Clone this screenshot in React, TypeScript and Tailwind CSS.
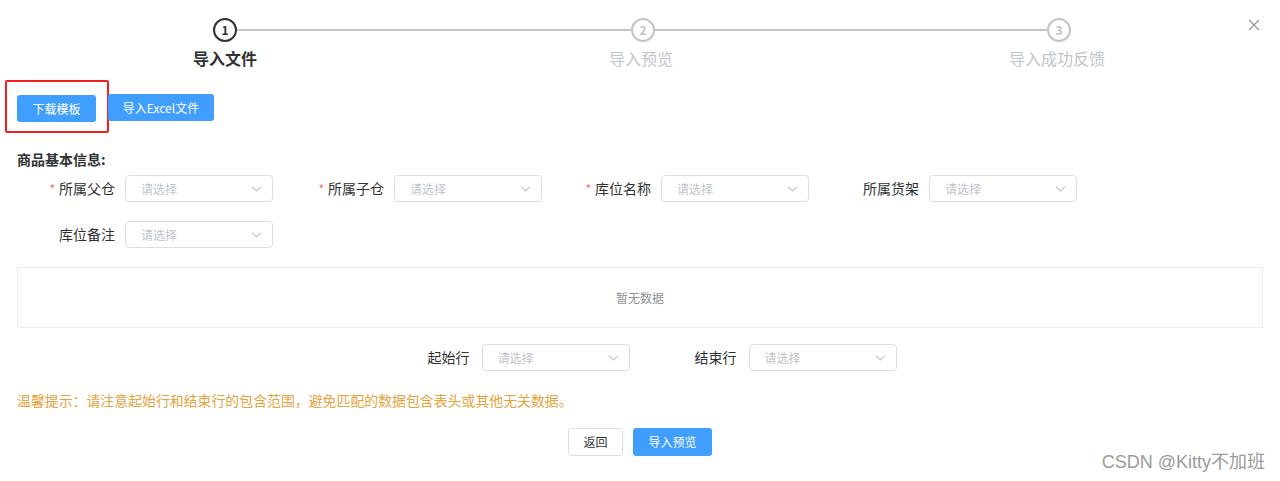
import React from "react";

const font = { fontFamily: '"Noto Sans CJK SC", "Noto Sans", "Liberation Sans", sans-serif' };

function Chevron() {
  return (
    <svg width="13" height="13" viewBox="0 0 12 12" fill="none" className="text-[#c0c4cc]">
      <path d="M1.8 4.2 L6 8.2 L10.2 4.2" stroke="currentColor" strokeWidth="1" />
    </svg>
  );
}

function Select() {
  return (
    <div className="w-[148px] h-[27px] border border-[#dcdfe6] rounded-[4px] bg-white flex items-center justify-between pl-[15px] pr-[9px] shrink-0">
      <span className="text-[12px] text-[#c0c4cc]">请选择</span>
      <Chevron />
    </div>
  );
}

function Field({ label, required, labelW = "w-[110px]" }: { label: string; required?: boolean; labelW?: string }) {
  return (
    <div className="flex items-center">
      <div className={`${labelW} pr-[10px] text-right text-[14px] text-[#303133] shrink-0`}>
        {required && <span className="text-[#f56c6c] mr-[4px] text-[12px]">*</span>}
        {label}
      </div>
      <Select />
    </div>
  );
}

function Circle({ n, active }: { n: number; active?: boolean }) {
  return (
    <div
      className={`w-[24px] h-[24px] rounded-full border-2 flex items-center justify-center text-[12px] font-bold shrink-0 ${
        active ? "border-[#303133] text-[#303133]" : "border-[#c0c4cc] text-[#c0c4cc]"
      }`}
    >
      {n}
    </div>
  );
}

export default function App() {
  return (
    <div className="w-[1280px] h-[481px] bg-white relative overflow-hidden" style={font}>
      {/* close */}
      <div className="absolute right-[20px] top-[19px]">
        <svg width="12" height="12" viewBox="0 0 12 12">
          <path d="M1 1 L11 11 M11 1 L1 11" stroke="#909399" strokeWidth="1.1" />
        </svg>
      </div>

      {/* steps */}
      <div className="pt-[18px] pl-[17px]">
        <div className="flex items-center">
          <div className="w-[196px]" />
          <Circle n={1} active />
          <div className="w-[394px] h-[2px] bg-[#c0c4cc]" />
          <Circle n={2} />
          <div className="w-[392px] h-[2px] bg-[#c0c4cc]" />
          <Circle n={3} />
        </div>
        <div className="flex mt-[5px]">
          <div className="w-[416px] text-center text-[16px] font-bold text-[#303133] leading-[22px]">导入文件</div>
          <div className="w-[416px] text-center text-[16px] text-[#c0c4cc] leading-[22px]">导入预览</div>
          <div className="w-[416px] text-center text-[16px] text-[#c0c4cc] leading-[22px]">导入成功反馈</div>
        </div>
      </div>

      {/* buttons */}
      <div className="flex items-start mt-[11px] pl-[5px]">
        <div className="border-2 border-[#f0201c] rounded-[2px] w-[104px] h-[53px] pl-[10px] pt-[13px] shrink-0">
          <div className="w-[79px] h-[27px] bg-[#409eff] rounded-[3px] text-white text-[12px] flex items-center justify-center">下载模板</div>
        </div>
        <div className="-ml-[1px] mt-[14px] w-[106px] h-[27px] bg-[#409eff] rounded-[3px] text-white text-[12px] flex items-center justify-center">导入Excel文件</div>
      </div>

      {/* basic info */}
      <div className="pl-[17px] mt-[16px] text-[14px] font-bold text-[#303133] leading-[20px]">商品基本信息:</div>
      <div className="pl-[15px] mt-[6px] flex flex-wrap gap-y-[19px] w-[1200px]">
        <div className="w-[268px]"><Field label="所属父仓" required /></div>
        <div className="w-[267px]"><Field label="所属子仓" required labelW="w-[111px]" /></div>
        <div className="w-[267px]"><Field label="库位名称" required labelW="w-[111px]" /></div>
        <div className="w-[267px]"><Field label="所属货架" labelW="w-[112px]" /></div>
        <div className="w-[268px]"><Field label="库位备注" /></div>
      </div>

      {/* table */}
      <div className="mx-[17px] mt-[19px] w-[1246px] h-[61px] border border-[#ebeef5] flex items-center justify-center">
        <span className="text-[12px] text-[#909399]">暂无数据</span>
      </div>

      {/* row range */}
      <div className="flex justify-center mt-[16px] pr-[14px]">
        <div className="flex items-center">
          <div className="w-[112px] pr-[12px] text-right text-[14px] text-[#303133]">起始行</div>
          <Select />
        </div>
        <div className="flex items-center ml-[7px]">
          <div className="w-[112px] pr-[12px] text-right text-[14px] text-[#303133]">结束行</div>
          <Select />
        </div>
      </div>

      {/* tip */}
      <div className="pl-[17px] mt-[19px] text-[13.9px] text-[#e6a23c] leading-[20px]">
        温馨提示：请注意起始行和结束行的包含范围，避免匹配的数据包含表头或其他无关数据。
      </div>

      {/* footer buttons */}
      <div className="flex justify-center mt-[18px] gap-[10px]">
        <div className="w-[55px] h-[28px] border border-[#dcdfe6] rounded-[3px] bg-white text-[12px] text-[#303133] flex items-center justify-center">返回</div>
        <div className="w-[79px] h-[28px] bg-[#409eff] rounded-[3px] text-white text-[12px] flex items-center justify-center">导入预览</div>
      </div>

      {/* watermark */}
      <div className="absolute right-[15px] bottom-[5px] text-[18px] text-[#9a9a9a]" style={{ fontFamily: '"Liberation Sans", "Noto Sans CJK SC", sans-serif' }}>
        CSDN @Kitty不加班
      </div>
    </div>
  );
}
